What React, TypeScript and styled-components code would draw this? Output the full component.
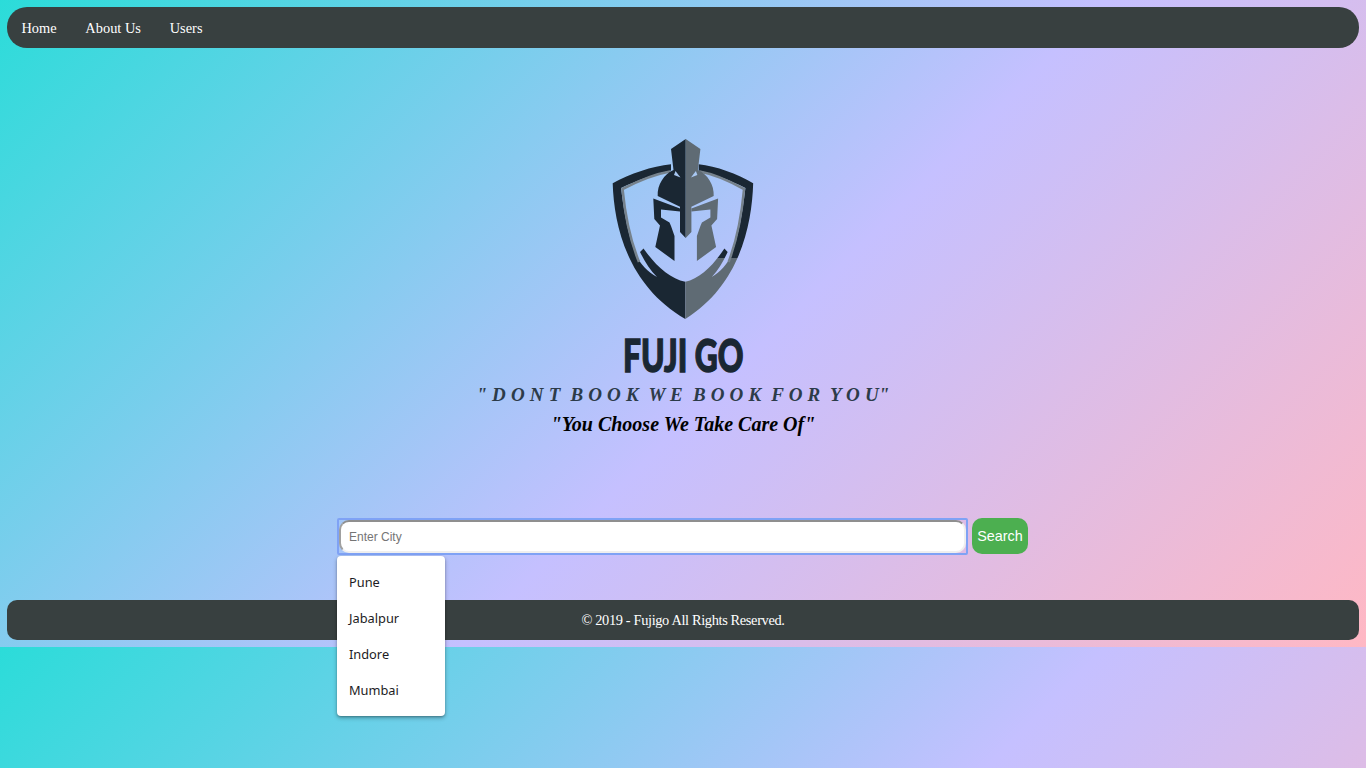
import React from "react";
import styled, { createGlobalStyle } from "styled-components";

const Global = createGlobalStyle`
  html { margin: 0; height: 100%; }
  body {
    margin: 0;
    box-sizing: border-box;
    min-height: 100%;
    padding: 7px;
    background: linear-gradient(135deg, #2bdcd9 0%, #c5c0ff 55%, #ffb8c4 100%);
    background-size: 100% 647px;
    font-family: "Liberation Serif", serif;
  }
`;

const Page = styled.div`
  display: flex;
  flex-direction: column;
`;

const NavBar = styled.nav`
  height: 41px;
  box-sizing: border-box;
  padding-top: 1px;
  display: flex;
  align-items: center;
  background: #384040;
  border-radius: 20px;
`;

const NavLink = styled.a`
  padding: 0 14.4px;
  color: #fff;
  font-size: 14.4px;
`;

const Hero = styled.section`
  margin-top: 77px;
  height: 393px;
  display: flex;
  flex-direction: column;
  align-items: center;
`;

const Logo = styled.svg`
  display: block;
  width: 190px;
  height: 205px;
  margin-left: 4px;
`;

const Brand = styled.h1`
  margin: 5px 0 0;
  height: 40px;
  line-height: 40px;
  font-family: "Lato", sans-serif;
  font-weight: 900;
  font-size: 46px;
  color: #1a2733;
  transform: scaleX(0.69);
  -webkit-text-stroke: 1.4px #1a2733;
`;

const Motto = styled.p`
  margin: 5px 0 0;
  height: 30px;
  line-height: 30px;
  font-style: italic;
  font-weight: 700;
  font-size: 19px;
  letter-spacing: 0.2px;
  color: #2c3b49;
  white-space: pre;
`;

const Tagline = styled.p`
  margin: 0;
  height: 28px;
  line-height: 28px;
  font-style: italic;
  font-weight: 700;
  font-size: 20px;
  color: #000;
`;

const SearchRow = styled.form`
  position: relative;
  margin: 0 0 0 330px;
  display: flex;
  align-items: flex-start;
  gap: 4px;
  height: 82px;
`;

const InputFrame = styled.div`
  width: 631px;
  height: 37px;
  box-sizing: border-box;
  border: 2px solid #7fa2f5;
  border-radius: 2px;
  display: flex;
`;

const CityInput = styled.input`
  flex: 1;
  min-width: 0;
  box-sizing: border-box;
  border-style: solid;
  border-width: 2px;
  border-color: #8f8f8f #efefef #efefef #a0a0a0;
  border-radius: 10px;
  padding: 0 8px;
  background: #fff;
  font-family: "Liberation Sans", sans-serif;
  font-size: 12px;
  outline: none;
  &::placeholder { color: #757575; opacity: 1; }
`;

const SearchButton = styled.button`
  width: 56px;
  height: 36px;
  padding: 0;
  border: none;
  border-radius: 10px;
  background: #4caf50;
  color: #fff;
  font-family: "Liberation Sans", sans-serif;
  font-size: 14.4px;
`;

const Menu = styled.ul`
  position: absolute;
  z-index: 2;
  left: 0;
  top: 38px;
  width: 108px;
  margin: 0;
  padding: 8px 0;
  list-style: none;
  background: #fff;
  border-radius: 4px;
  box-shadow: 0 2px 4px rgba(0, 0, 0, 0.3), 0 1px 2px rgba(0, 0, 0, 0.2);
`;

const MenuItem = styled.li`
  height: 36px;
  line-height: 36px;
  padding-left: 12px;
  font-family: "Noto Sans", sans-serif;
  font-size: 12.8px;
  color: #1c1c24;
`;

const Footer = styled.footer`
  height: 40px;
  display: flex;
  align-items: center;
  justify-content: center;
  background: #384040;
  border-radius: 10px;
  color: #fff;
  font-size: 14.4px;
  letter-spacing: -0.36px;
`;

const DARK = "#1a2733";
const GREY = "#5f6b74";
const LINE = "#76828c";
const SKY = "#a9c8f3";

const ring =
  "M671 164.3 C652 166 630 174 612.7 183.3 C614 225 627 285 685.3 319 L685.3 281.7 C670 279 655 265 643.5 248.5 L640 252 C645 262 650 270 657 277 C648 272 640 264 636 255 C628 235 624 212 621 188 C638 180 655 174 671 170.5 Z";
const ringLine = "M670 171.5 C655 174 640 180 622.5 189 C625 215 630 240 639 262";
const crest =
  "M685.7 139 L671 149 L673.5 170 C664 174 657 185 657.7 196 L680 206.8 L680 232 L685.7 238 Z";
const cheek =
  "M653.3 198.5 L680 208.5 L680 211.5 L661 209.5 L661 217.5 L669.5 222.5 L671 226 L674.5 236 L674.5 261 L655.3 247 L660 225.5 L654.3 219 Z";
const notch = "M675.5 171 L680.5 177.5 L674 175 Z";

const ShieldLogo = () => (
  <Logo viewBox="590 125 190 205" aria-hidden="true">
    <defs>
      <linearGradient id="rightRing" gradientUnits="userSpaceOnUse" x1="0" y1="125" x2="0" y2="330">
        <stop offset="0.65" stopColor={DARK} />
        <stop offset="0.65" stopColor={GREY} />
      </linearGradient>
    </defs>
    <path d={ring} fill={DARK} />
    <path d={ringLine} fill="none" stroke={LINE} strokeWidth="2.6" />
    <g transform="translate(685.3 0) scale(-0.935 1) translate(-685.3 0)">
      <path d={ring} fill="url(#rightRing)" />
      <path d={ringLine} fill="none" stroke={LINE} strokeWidth="2.6" />
    </g>
    <path d={crest} fill={DARK} />
    <path d={cheek} fill={DARK} />
    <path d={notch} fill={SKY} />
    <g transform="translate(1371.4 0) scale(-1 1)">
      <path d={crest} fill={GREY} />
      <path d={cheek} fill={GREY} />
      <path d={notch} fill={SKY} />
    </g>
  </Logo>
);

export default function App() {
  return (
    <Page>
      <Global />
      <NavBar>
        <NavLink>Home</NavLink>
        <NavLink>About Us</NavLink>
        <NavLink>Users</NavLink>
      </NavBar>
      <Hero>
        <ShieldLogo />
        <Brand>FUJI GO</Brand>
        <Motto>{'" D O N T  B O O K  W E  B O O K  F O R  Y O U"'}</Motto>
        <Tagline>"You Choose We Take Care Of"</Tagline>
      </Hero>
      <SearchRow onSubmit={(e) => e.preventDefault()}>
        <InputFrame>
          <CityInput placeholder="Enter City" />
        </InputFrame>
        <SearchButton type="submit">Search</SearchButton>
        <Menu>
          <MenuItem>Pune</MenuItem>
          <MenuItem>Jabalpur</MenuItem>
          <MenuItem>Indore</MenuItem>
          <MenuItem>Mumbai</MenuItem>
        </Menu>
      </SearchRow>
      <Footer>© 2019 - Fujigo All Rights Reserved.</Footer>
    </Page>
  );
}
